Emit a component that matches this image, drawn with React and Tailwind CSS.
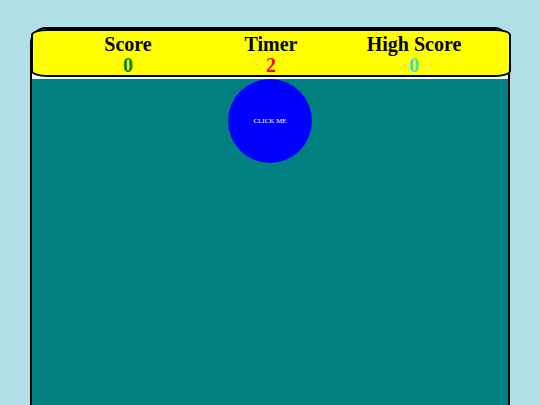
import React, { useState } from 'react';

const STATS = [
  { label: 'Score', value: 0, color: 'text-[#008000]' },
  { label: 'Timer', value: 2, color: 'text-[#ff0000]' },
  { label: 'High Score', value: 0, color: 'text-[#40e0d0]' },
];

const App = () => {
  const [score, setScore] = useState(0);

  return (
    <div className="h-[405px] overflow-hidden bg-[#b0e0e6] pt-[27px]" style={{ fontFamily: '"Liberation Serif", "Times New Roman", serif' }}>
      <div className="mx-[30px] h-[400px] border-2 border-black rounded-[16px] bg-white flex flex-col">
        <div className="-ml-[1px] -mr-[3px] h-[48px] bg-[#ffff00] border-2 border-black rounded-[16px/6px] pt-[3px] flex justify-center">
          {STATS.map(s => (
            <div key={s.label} className="w-[143px] flex flex-col items-center text-[20px] leading-[21px] font-bold">
              <span className="text-black">{s.label}</span>
              <span className={s.color}>{s.label === 'Score' ? score : s.value}</span>
            </div>
          ))}
        </div>
        <div className="mt-[2px] flex-1 bg-[#008080] rounded-b-[14px] relative">
          <button
            onClick={() => setScore(score + 1)}
            className="absolute left-1/2 top-0 -translate-x-1/2 w-[84px] h-[84px] rounded-full bg-[#0000ff] text-white text-[7px] flex items-center justify-center"
          >
            CLICK ME
          </button>
        </div>
      </div>
    </div>
  );
};

export default App;
